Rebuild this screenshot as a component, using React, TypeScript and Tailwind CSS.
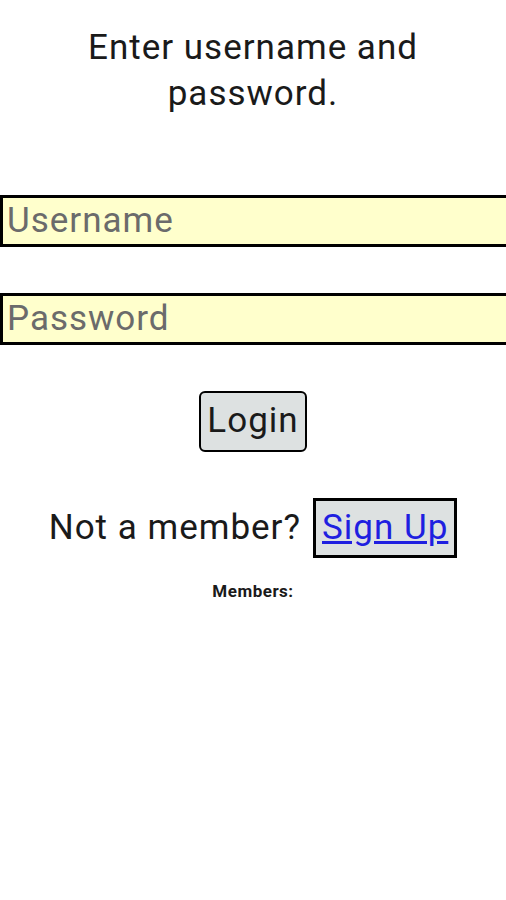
const App = () => {
  return (
    <div className="min-h-[900px] w-full overflow-x-hidden bg-white font-['Roboto',sans-serif] text-black">
      <h1 className="px-4 pt-[25px] text-center text-[35px] leading-[46px] font-normal tracking-[1px] text-[#1a1a1a]">
        Enter username and password.
      </h1>

      <div className="mt-[78px] flex flex-col gap-[46px]">
        <input
          type="text"
          placeholder="Username"
          className="h-[52px] w-[530px] border-[3px] border-black bg-[#ffffcc] px-[4px] text-[35px] tracking-[1px] text-black placeholder:text-[#6b6b6b] outline-none"
        />
        <input
          type="password"
          placeholder="Password"
          className="h-[52px] w-[530px] border-[3px] border-black bg-[#ffffcc] px-[4px] text-[35px] tracking-[1px] text-black placeholder:text-[#6b6b6b] outline-none"
        />
      </div>

      <div className="mt-[46px] flex justify-center">
        <button className="h-[61px] w-[108px] rounded-[6px] border-2 border-black bg-[#dde1e1] text-[35px] tracking-[1px] text-[#1a1a1a]">
          Login
        </button>
      </div>

      <div className="mt-[46px] flex items-center justify-center gap-[12px]">
        <span className="text-[35px] tracking-[1px] text-[#1a1a1a]">Not a member?</span>
        <a
          href="#"
          className="flex h-[60px] items-center border-[3px] border-black bg-[#dde1e1] px-[6px] text-[35px] tracking-[1px] text-[#1f1fe0] underline"
        >
          Sign Up
        </a>
      </div>

      <p className="mt-[23px] text-center text-[17px] leading-[20px] font-bold tracking-[0.5px] text-[#1a1a1a]">
        Members:
      </p>
    </div>
  );
};

export default App;
